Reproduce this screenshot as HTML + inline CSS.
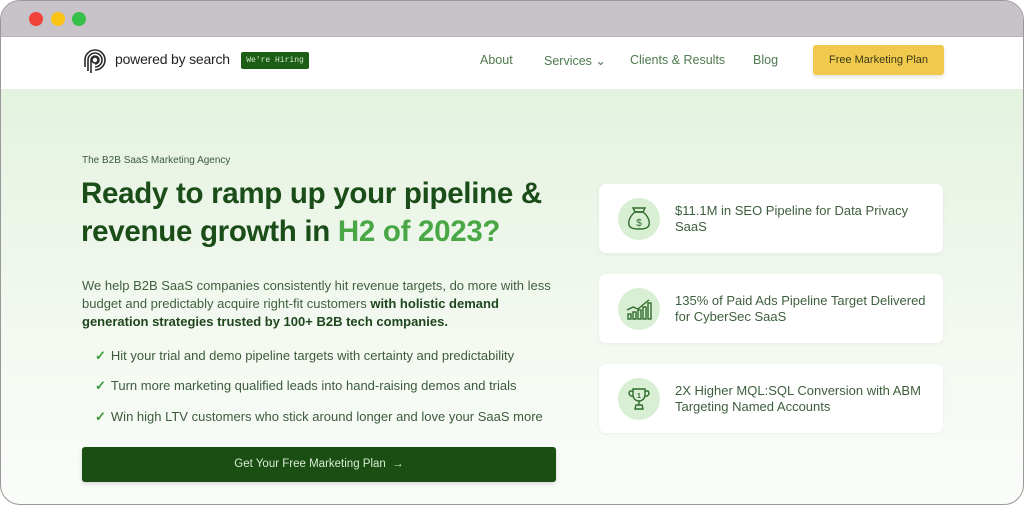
<!DOCTYPE html>
<html><head><style>
*{margin:0;padding:0;box-sizing:border-box}
body{width:1024px;height:505px;background:#fff;font-family:"Liberation Sans",sans-serif;overflow:hidden;position:relative}
.frame{position:absolute;left:0;top:0;width:1024px;height:505px;border:1px solid #9a979a;border-radius:20px;overflow:hidden;background:linear-gradient(#dcefd7 0,#e6f3e2 120px,#f3f9f1 330px,#fafcf9 505px)}
.bar{position:absolute;left:0;top:0;width:100%;height:36px;background:#c8c3c8;border-bottom:1px solid #b5b0b5}
.dot{position:absolute;top:11px;width:14px;height:14px;border-radius:50%}
.nav{position:absolute;top:36px;left:0;width:100%;height:52px;background:#fff}
.abs{position:absolute}
.navl{font-size:12.5px;color:#4f7a4f;top:16px}
.card{position:absolute;left:598px;width:344px;height:69px;background:#fff;border-radius:7px;box-shadow:0 1px 4px rgba(0,0,0,.05)}
.ic{position:absolute;left:19px;top:14px;width:42px;height:42px;border-radius:50%;background:#d9efd4}
.ct{position:absolute;left:76px;top:19px;font-size:13px;line-height:16px;color:#3d5e3d;width:260px}
.li{position:absolute;left:94px;font-size:13px;color:#3c5a3c}
.li b{color:#3a9a3a;font-weight:bold;margin-right:5px}
</style></head><body>
<div class="frame">
<div class="bar"></div>
<div class="dot" style="left:28px;background:#f1433c"></div>
<div class="dot" style="left:50px;background:#fbc313"></div>
<div class="dot" style="left:71px;background:#36c04a"></div>
<div class="nav">
<svg class="abs" style="left:80px;top:10px" width="28" height="28" viewBox="0 0 28 28" fill="none" stroke="#2a2a2a" stroke-width="1.6"><circle cx="14" cy="13" r="3"/><path d="M10 26V13a4 4 0 1 1 4 4"/><path d="M7 24V13a7 7 0 1 1 7 7"/><path d="M4 20V13a10 10 0 1 1 10 10"/></svg>
<div class="abs" style="left:114px;top:14px;font-size:14px;color:#222;letter-spacing:-.2px">powered by search</div>
<div class="abs" style="left:240px;top:15px;width:68px;height:17px;background:#1d5e16;border-radius:2px;color:#cfe8c8;font-family:'Liberation Mono',monospace;font-size:8px;text-align:center;line-height:17px">We're Hiring</div>
<div class="abs navl" style="left:479px">About</div>
<div class="abs navl" style="left:543px">Services ⌄</div>
<div class="abs navl" style="left:629px">Clients &amp; Results</div>
<div class="abs navl" style="left:752px">Blog</div>
<div class="abs" style="left:812px;top:8px;width:131px;height:30px;background:#f1c94c;border-radius:3px;font-size:11px;color:#3a3a1a;text-align:center;line-height:30px;box-shadow:0 2px 4px rgba(0,0,0,.12)">Free Marketing Plan</div>
</div>
<div class="abs" style="left:81px;top:154px;font-size:10px;color:#3d5a3d">The B2B SaaS Marketing Agency</div>
<div class="abs" style="left:80px;top:174px;font-size:29.5px;font-weight:bold;line-height:38px;color:#1b4d18;letter-spacing:-.3px">Ready to ramp up your pipeline &amp;<br>revenue growth in <span style="color:#49a845">H2 of 2023?</span></div>
<div class="abs" style="left:81px;top:276px;width:478px;font-size:13px;line-height:18px;color:#3f5f3f">We help B2B SaaS companies consistently hit revenue targets, do more with less budget and predictably acquire right-fit customers <b style="color:#1e451c">with holistic demand<br>generation strategies trusted by 100+ B2B tech companies.</b></div>
<div class="li" style="top:347px"><b>✓</b>Hit your trial and demo pipeline targets with certainty and predictability</div>
<div class="li" style="top:377px"><b>✓</b>Turn more marketing qualified leads into hand-raising demos and trials</div>
<div class="li" style="top:408px"><b>✓</b>Win high LTV customers who stick around longer and love your SaaS more</div>
<div class="abs" style="left:81px;top:446px;width:474px;height:35px;background:#1a4e12;border-radius:3px;color:#d8ecd4;font-size:11.5px;text-align:center;line-height:35px;box-shadow:0 2px 4px rgba(0,0,0,.15)">Get Your Free Marketing Plan &nbsp;→</div>
<div class="card" style="top:183px"><div class="ic"><svg width="42" height="42" viewBox="0 0 42 42" fill="none" stroke="#2f6a2b" stroke-width="1.4"><path d="M17 14l-2-4h12l-2 4z"/><path d="M17 14c-5 4-7 9-6 13 1 3 4 4 10 4s9-1 10-4c1-4-1-9-6-13z"/><text x="21" y="28" font-size="10" text-anchor="middle" fill="#2f6a2b" stroke="none" font-family="Liberation Sans">$</text></svg></div><div class="ct">$11.1M in SEO Pipeline for Data Privacy SaaS</div></div>
<div class="card" style="top:273px"><div class="ic"><svg width="42" height="42" viewBox="0 0 42 42" fill="none" stroke="#2f6a2b" stroke-width="1.4"><path d="M9 22l6-3 5 2 6-5 5-4"/><rect x="10" y="26" width="3" height="5"/><rect x="15" y="24" width="3" height="7"/><rect x="20" y="22" width="3" height="9"/><rect x="25" y="19" width="3" height="12"/><rect x="30" y="15" width="3" height="16"/></svg></div><div class="ct">135% of Paid Ads Pipeline Target Delivered for CyberSec SaaS</div></div>
<div class="card" style="top:363px"><div class="ic"><svg width="42" height="42" viewBox="0 0 42 42" fill="none" stroke="#2f6a2b" stroke-width="1.4"><path d="M15 11h12v6a6 6 0 0 1-12 0z"/><path d="M15 13h-3a3 3 0 0 0 3 5M27 13h3a3 3 0 0 1-3 5"/><path d="M21 23v4M17 31h8l-1-4h-6z"/><text x="21" y="20" font-size="7" text-anchor="middle" fill="#2f6a2b" stroke="none" font-family="Liberation Sans" font-weight="bold">1</text></svg></div><div class="ct">2X Higher MQL:SQL Conversion with ABM Targeting Named Accounts</div></div>
</div>
</body></html>
